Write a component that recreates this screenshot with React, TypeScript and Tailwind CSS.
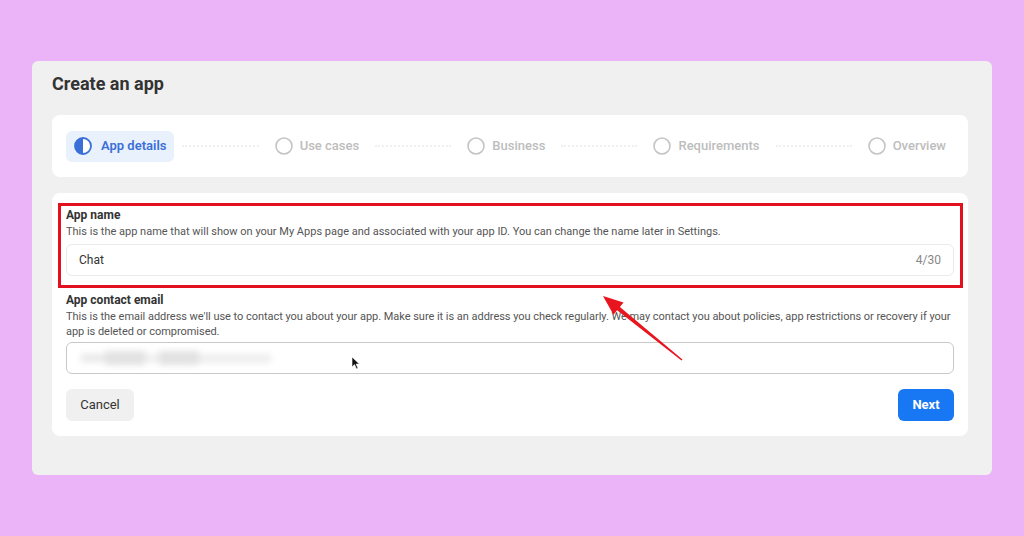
const steps = ["Use cases", "Business", "Requirements", "Overview"];

function EmptyCircle() {
  return (
    <svg width="18" height="18" viewBox="0 0 18 18" className="shrink-0">
      <circle cx="9" cy="9" r="8" fill="none" stroke="#c4c4c4" strokeWidth="1.6" />
    </svg>
  );
}

function HalfCircle() {
  return (
    <svg width="18" height="18" viewBox="0 0 18 18" className="shrink-0">
      <circle cx="9" cy="9" r="8" fill="#fff" stroke="#3a6fd8" strokeWidth="1.8" />
      <path d="M9 1 A8 8 0 0 0 9 17 Z" fill="#3a6fd8" />
    </svg>
  );
}

function Connector() {
  return <div className="mx-2 flex-1 border-t-2 border-dotted border-[#f0f0f0]" />;
}

export default function App() {
  return (
    <div
      className="relative h-[536px] w-[1024px] overflow-hidden bg-[#ebb3f8] px-8 pt-[61px]"
      style={{ fontFamily: "Roboto, 'Liberation Sans', sans-serif" }}
    >
      <div className="h-[414px] rounded-md bg-[#f0f0f0] pl-5 pr-6 pt-[11px]">
        <h1 className="text-[18px] font-bold leading-6 text-[#333]">Create an app</h1>

        {/* stepper */}
        <div className="mt-[19px] flex h-[62px] items-center rounded-lg bg-white px-[14px]">
          <div className="flex h-[31px] items-center gap-[9px] rounded-md bg-[#e9f1fc] px-2">
            <HalfCircle />
            <span className="text-[13px] font-semibold text-[#3a6fd8]">App details</span>
          </div>
          {steps.map((s) => (
            <>
              <Connector key={s + "-c"} />
              <div key={s} className="flex h-[31px] items-center gap-[7px] px-2">
                <EmptyCircle />
                <span className="text-[13px] font-medium text-[#bdbdbd]">{s}</span>
              </div>
            </>
          ))}
        </div>

        {/* form */}
        <div className="relative mt-4 rounded-lg bg-white px-[14px] pb-[15px] pt-[14px]">
          <div className="pointer-events-none absolute left-[6px] top-[10px] h-[85px] w-[905px] border-[3px] border-[#e3101e]" />

          <div className="text-[12px] font-bold leading-4 text-[#333]">App name</div>
          <p className="mt-px text-[11px] leading-[15px] text-[#555]">
            This is the app name that will show on your My Apps page and associated with your app ID. You can change the name later in Settings.
          </p>
          <div className="mt-[5px] flex h-8 items-center justify-between rounded-md border border-[#ebebeb] px-3">
            <span className="text-[12px] text-[#333]">Chat</span>
            <span className="text-[12px] text-[#888]">4/30</span>
          </div>

          <div className="mt-4 text-[12px] font-bold leading-4 text-[#333]">App contact email</div>
          <p className="-mr-[8px] mt-px text-[11px] leading-[15px] tracking-[-0.003em] text-[#555]">
            This is the email address we'll use to contact you about your app. Make sure it is an address you check regularly. We may contact you about policies, app restrictions or recovery if your
            <br />
            app is deleted or compromised.
          </p>
          <div className="relative mt-[3px] flex h-8 items-center rounded-md border border-[#c9c9c9] pl-[14px]">
            <div className="flex items-center blur-[3px]">
              <div className="h-[8px] w-[24px] bg-[#e8e8e8]" />
              <div className="h-[14px] w-[40px] bg-[#e2e2e2]" />
              <div className="h-[8px] w-[14px] bg-[#eeeeee]" />
              <div className="h-[14px] w-[40px] bg-[#e2e2e2]" />
              <div className="h-[9px] w-[72px] bg-[#eeeeee]" />
            </div>
            <svg className="absolute left-[284px] top-[13px]" width="10" height="14" viewBox="0 0 10 14">
              <path d="M1 1 L1 11 L3.5 8.6 L5.5 13 L7 12.3 L5.1 8 L8.4 8 Z" fill="#111" stroke="#fff" strokeWidth="0.6" />
            </svg>
          </div>

          <div className="mt-[15px] flex items-center justify-between">
            <button className="h-8 w-[68px] rounded-md bg-[#f0f0f0] text-[13px] text-[#333]">Cancel</button>
            <button className="h-8 w-[56px] rounded-md bg-[#1877f2] text-[13px] font-bold text-white">Next</button>
          </div>
        </div>
      </div>

      <svg className="pointer-events-none absolute left-0 top-0" width="1024" height="536" viewBox="0 0 1024 536">
        <polygon
          points="603,296 623.5,302.4 619.9,306.9 682.5,359.4 681.5,360.6 617.1,310.3 613.5,314.8"
          fill="#e8151f"
        />
      </svg>
    </div>
  );
}
